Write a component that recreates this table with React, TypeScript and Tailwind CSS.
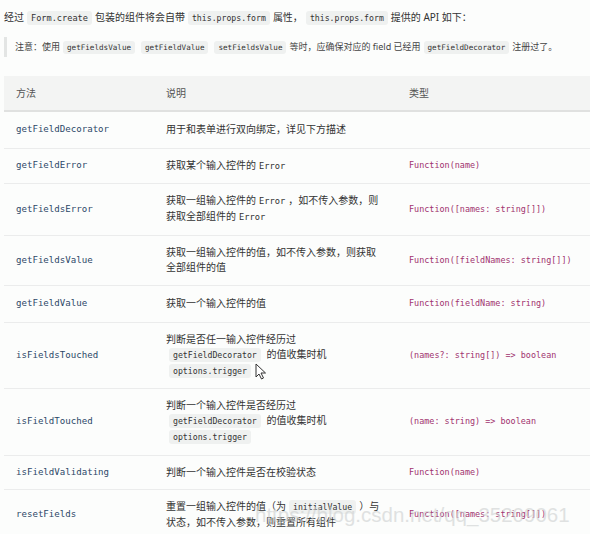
import React from "react";

const CJK = "font-['Noto_Sans','Noto_Sans_CJK_SC',sans-serif]";
const MONO = "font-['DejaVu_Sans_Mono',monospace]";

function Chip({ children, size = "text-[8.2px]", mx = "mx-[3px]" }: { children: React.ReactNode; size?: string; mx?: string }) {
  return (
    <code className={`${MONO} ${size} bg-[#eff1f0] text-[#333] rounded-[3px] px-[4px] py-[2px] ${mx}`}>
      {children}
    </code>
  );
}

function Mono({ children }: { children: React.ReactNode }) {
  return <span className={`${MONO} text-[8.7px] mx-[3px]`}>{children}</span>;
}

type Row = { name: string; desc: React.ReactNode; type: string; h: string };

const rows: Row[] = [
  { name: "getFieldDecorator", desc: "用于和表单进行双向绑定，详见下方描述", type: "", h: "h-[37px]" },
  { name: "getFieldError", desc: <>获取某个输入控件的<Mono>Error</Mono></>, type: "Function(name)", h: "h-[35px]" },
  {
    name: "getFieldsError",
    desc: <>获取一组输入控件的<Mono>Error</Mono>，如不传入参数，则获取全部组件的<Mono>Error</Mono></>,
    type: "Function([names: string[]])",
    h: "h-[52px]",
  },
  {
    name: "getFieldsValue",
    desc: "获取一组输入控件的值，如不传入参数，则获取全部组件的值",
    type: "Function([fieldNames: string[]])",
    h: "h-[50px]",
  },
  { name: "getFieldValue", desc: "获取一个输入控件的值", type: "Function(fieldName: string)", h: "h-[37px]" },
  {
    name: "isFieldsTouched",
    desc: (
      <>
        判断是否任一输入控件经历过
        <br />
        <Chip>getFieldDecorator</Chip> 的值收集时机
        <br />
        <Chip>options.trigger</Chip>
      </>
    ),
    type: "(names?: string[]) => boolean",
    h: "h-[66px]",
  },
  {
    name: "isFieldTouched",
    desc: (
      <>
        判断一个输入控件是否经历过
        <br />
        <Chip>getFieldDecorator</Chip> 的值收集时机
        <br />
        <Chip>options.trigger</Chip>
      </>
    ),
    type: "(name: string) => boolean",
    h: "h-[67px]",
  },
  { name: "isFieldValidating", desc: "判断一个输入控件是否在校验状态", type: "Function(name)", h: "h-[34px]" },
  {
    name: "resetFields",
    desc: (
      <>
        重置一组输入控件的值（为<Chip>initialValue</Chip>）与状态，如不传入参数，则重置所有组件
      </>
    ),
    type: "Function([names: string[]])",
    h: "h-[50px]",
  },
];

export default function App() {
  return (
    <div className={`relative w-[590px] h-[534px] overflow-hidden bg-[#fcfdfc] text-[#333] ${CJK}`}>
      <div className="pl-[4px] pt-[9px] text-[10px] leading-[16px] whitespace-nowrap">
        经过<Chip size="text-[8.6px]">Form.create</Chip>包装的组件将会自带<Chip size="text-[8.2px]">this.props.form</Chip>属性，
        <Chip size="text-[8.2px]">this.props.form</Chip>提供的 API 如下：
      </div>
      <div className="ml-[4px] mt-[11px] border-l-[3px] border-[#e3e5e4] pl-[8px] py-[2px] text-[9px] leading-[15px] whitespace-nowrap text-[#444]">
        注意：使用<Chip size="text-[7.6px]">getFieldsValue</Chip>
        <Chip size="text-[7.6px]">getFieldValue</Chip>
        <Chip size="text-[7.6px]">setFieldsValue</Chip>等时，应确保对应的 field 已经用
        <Chip size="text-[7.6px]">getFieldDecorator</Chip>注册过了。
      </div>
      <table className="ml-[4px] mt-[19px] w-[590px] border-collapse text-[10px] leading-[15px] table-fixed">
        <colgroup>
          <col className="w-[150px]" />
          <col className="w-[243px]" />
          <col />
        </colgroup>
        <thead>
          <tr className="h-[35px] bg-[#f3f4f3] border-b-2 border-[#e0e1e0]">
            <th className="text-left font-normal pl-[12px] text-[#555]">方法</th>
            <th className="text-left font-normal pl-[12px] text-[#555]">说明</th>
            <th className="text-left font-normal pl-[12px] text-[#555]">类型</th>
          </tr>
        </thead>
        <tbody>
          {rows.map((r) => (
            <tr key={r.name} className={`${r.h} border-b border-[#ebecec]`}>
              <td className={`pl-[12px] align-middle ${MONO} text-[9.1px] text-[#2c4868]`}>{r.name}</td>
              <td className="px-[12px] align-middle text-[#333]">{r.desc}</td>
              <td className={`pl-[12px] align-middle ${MONO} text-[8.45px] text-[#a1336f] whitespace-nowrap`}>{r.type}</td>
            </tr>
          ))}
        </tbody>
      </table>
      <svg className="absolute left-[255px] top-[363px]" width="12" height="17" viewBox="0 0 12 17">
        <path d="M1 1 L1 14 L4 11 L6.5 16 L8.5 15 L6 10 L10.5 10 Z" fill="#fff" stroke="#333" strokeWidth="1" strokeLinejoin="round" />
      </svg>
      <div className="absolute left-[255px] top-[500px] font-['Liberation_Sans',sans-serif] text-[20.5px] text-[#cdd0d0] opacity-60 whitespace-nowrap pointer-events-none">
        https://blog.csdn.net/qq_35209061
      </div>
    </div>
  );
}
